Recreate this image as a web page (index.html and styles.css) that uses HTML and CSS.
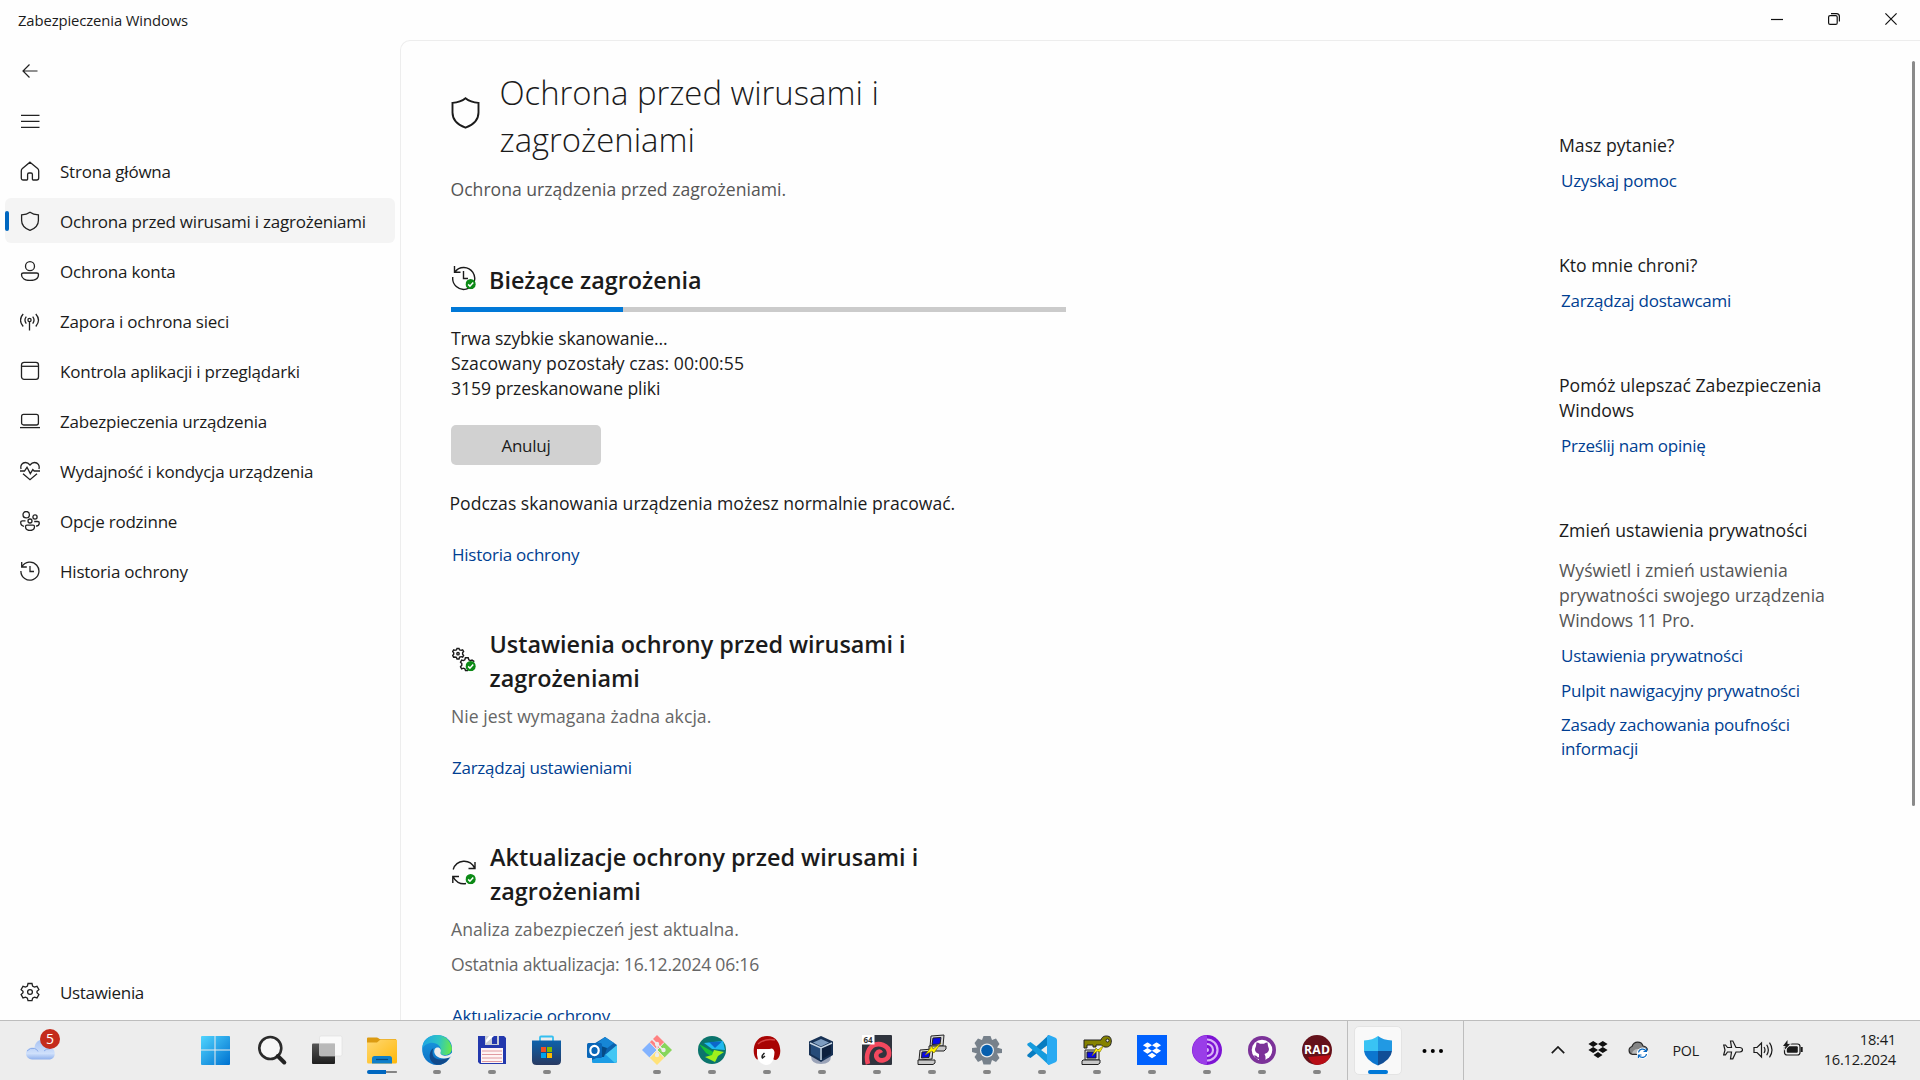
FILE: index.html
```html
<!DOCTYPE html>
<html lang="pl">
<head>
<meta charset="utf-8">
<title>Zabezpieczenia Windows</title>
<link rel="stylesheet" href="styles.css">
</head>
<body>
<svg class="defs" aria-hidden="true">
  <defs>
    <symbol id="shield" viewBox="0 0 20 20"><path d="M10 1.2C12.4 3 15.300 3.700 18.400 3.800V9.500C18.400 14.200 15.300 17.400 10 19.400C4.700 17.400 1.600 14.200 1.600 9.500V3.800C4.700 3.700 7.600 3 10 1.200Z"/></symbol>
    <symbol id="history" viewBox="0 0 20 20"><path d="M1.700 1V6H6.800M2 5.800A9 9 0 1 1 .9 10M10 5V10.500H14"/></symbol>
    <symbol id="ok" viewBox="0 0 10 10"><circle cx="5" cy="5" r="5" fill="#0c8a16" stroke="none"/><path d="M2.600 5.200 4.300 7 7.500 3.300" fill="none" stroke="#fff" stroke-width="1.500"/></symbol>
    <symbol id="gear" viewBox="0 0 20 20"><path d="M8 1.500h4l.6 2.600 1.800 1 2.600-.8 1.900 3.300-1.900 1.800v1.300l1.900 1.900-1.900 3.300-2.600-.8-1.800 1-.6 2.500H8l-.6-2.500-1.800-1-2.600.8-1.900-3.300L3 10.700V9.400L1.100 7.600 3 4.300l2.600.8 1.800-1Z"/><circle cx="10" cy="10" r="2.400"/></symbol>
    <symbol id="dropbox" viewBox="0 0 20 18"><path d="M5.200 0 10 3 5.200 6 .4 3ZM14.800 0 19.600 3 14.800 6 10 3ZM5.200 6 10 9 5.200 12 .4 9ZM14.800 6 19.600 9 14.800 12 10 9ZM10 11 14.500 14 10 17 5.500 14Z"/></symbol>
  </defs>
</svg>

<div class="window">
  <header class="titlebar">
    <span class="window-title">Zabezpieczenia Windows</span>
    <div class="window-controls">
      <svg width="12" height="12"><path d="M0 6.500H12"/></svg>
      <svg width="12" height="12"><rect x=".6" y="2.600" width="8.600" height="8.800" rx="1.500"/><path d="M3 .6H8.500Q11.400.6 11.400 3.500V8.600"/></svg>
      <svg width="12" height="12"><path d="M.4.4 11.600 11.600M11.600.4.4 11.600"/></svg>
    </div>
  </header>

  <div class="frame">
    <aside class="sidebar">
      <div class="tool"><svg class="ico" viewBox="0 0 20 20"><path class="thin" d="M17.500 10H3M9.500 3.500 3 10l6.500 6.500"/></svg></div>
      <div class="tool"><svg class="ico" viewBox="0 0 20 20"><path class="thin" d="M1 4.300H19.500M1 10.300H19.500M1 16.300H19.500"/></svg></div>
      <nav>
        <a class="item"><svg class="ico" viewBox="0 0 20 20"><path d="M10 1.200 17.600 7.600Q18.700 8.500 18.700 10V17Q18.700 19 16.700 19H13.200Q12.400 19 12.400 18.200V13.500Q12.400 12 11 12H9Q7.600 12 7.600 13.500V18.200Q7.600 19 6.800 19H3.300Q1.300 19 1.300 17V10Q1.300 8.500 2.400 7.600Z"/></svg><span>Strona główna</span></a>
        <a class="item selected"><svg class="ico"><use href="#shield"/></svg><span>Ochrona przed wirusami i zagrożeniami</span></a>
        <a class="item"><svg class="ico" viewBox="0 0 20 20"><circle cx="10" cy="5.200" r="4.500"/><path d="M3.500 12H16.500Q18.500 12 18.500 13.800C18.500 17.500 15 19.500 10 19.500S1.500 17.500 1.500 13.800Q1.500 12 3.500 12Z"/></svg><span>Ochrona konta</span></a>
        <a class="item"><svg class="ico" viewBox="0 0 20 20"><circle cx="9.500" cy="9" r="1.600"/><path d="M9.500 10.500V19.500M6.300 5.600Q3.600 9 6.300 12.600M12.700 5.600Q15.400 9 12.700 12.600M3.200 3Q-2.200 9 3.200 15.500M15.800 3Q21.200 9 15.800 15.500"/></svg><span>Zapora i ochrona sieci</span></a>
        <a class="item"><svg class="ico" viewBox="0 0 20 20"><rect x="1.500" y="1.300" width="17" height="17" rx="2.600"/><path d="M1.500 5.300H18.500"/></svg><span>Kontrola aplikacji i przeglądarki</span></a>
        <a class="item"><svg class="ico" viewBox="0 0 20 20"><rect x="1.600" y="3.400" width="16.800" height="10.600" rx="2"/><path d="M0 16.600H20"/></svg><span>Zabezpieczenia urządzenia</span></a>
        <a class="item"><svg class="ico" viewBox="0 0 20 20"><path d="M1.100 8C0 4.600 2.200 1.500 5.500 1.500Q8 1.500 10 4Q12 1.500 14.500 1.500C17.800 1.500 20 4.600 18.900 8M0 10H4.500L7 6.300 10.300 12.600 12.800 8.600 14.200 10H20M3 12.800 10 18.700 17 12.800"/></svg><span>Wydajność i kondycja urządzenia</span></a>
        <a class="item"><svg class="ico" viewBox="0 0 20 20"><circle cx="6.200" cy="3.700" r="3.200"/><circle cx="15" cy="6" r="2.100"/><circle cx="10" cy="10" r="2"/><path d="M5.500 9.800H2.500Q.7 9.800.7 11.500Q.7 14.600 4 15.300M14.200 10.500H17.500Q19.300 10.500 19.300 12Q19.300 14.800 16 15.200M7 14.200H13Q14.500 14.200 14.500 15.600C14.500 18.200 12.500 19.500 10 19.500S5.500 18.200 5.500 15.600Q5.500 14.200 7 14.200Z"/></svg><span>Opcje rodzinne</span></a>
        <a class="item"><svg class="ico"><use href="#history"/></svg><span>Historia ochrony</span></a>
      </nav>
      <a class="item settings"><svg class="ico"><use href="#gear"/></svg><span>Ustawienia</span></a>
    </aside>

    <main class="content">
      <div class="primary">
        <div class="page-head">
          <svg class="head-shield" viewBox="0 0 28 32"><path d="M14 1.300C17.500 4.200 22 5.600 27 5.900V15.500C27 22.800 22.200 27.700 14 30.700C5.800 27.700 1 22.800 1 15.500V5.900C6 5.600 10.500 4.200 14 1.300Z"/></svg>
          <h1>Ochrona przed wirusami i zagrożeniami</h1>
        </div>
        <p class="lead">Ochrona urządzenia przed zagrożeniami.</p>

        <section class="threats">
          <div class="section-head">
            <svg class="status" viewBox="0 0 24 24"><path d="M2.500.5V6.800H8.500M2.800 6.500A11 11 0 1 1 .8 11.500M11.500 5.500V13H16"/><use href="#ok" x="13.500" y="13.500" width="10.300" height="10.300"/></svg>
            <h2>Bieżące zagrożenia</h2>
          </div>
          <div class="progress"><div class="bar" style="width:28%"></div></div>
          <p class="scan">Trwa szybkie skanowanie...</p>
          <p class="eta">Szacowany pozostały czas: 00:00:55</p>
          <p class="count">3159 przeskanowane pliki</p>
          <button class="cancel">Anuluj</button>
          <p class="note">Podczas skanowania urządzenia możesz normalnie pracować.</p>
          <a class="link">Historia ochrony</a>
        </section>

        <section>
          <div class="section-head">
            <svg class="status" viewBox="0 0 24 24"><path d="M5 1h2l.6 1.500 1.600.3 1.400-.5 1 1.700-1 1.200v1.600l1 1.200-1 1.700-1.400-.5-1.600.3L7 11.500H5l-.6-1.700-1.600-.3-1.200.2L.7 8l1-1.200V5.200L.7 4l1-1.700 1.200.5 1.500-.3Z"/><circle cx="6" cy="6.200" r="1.200"/><path d="M16 23h-2.500l-.6-1.700-1.600-.6-1.600.6-1.200-2 1.300-1.500v-1.700L8.500 14.600l1.200-2 1.800.5 1.300-.8.600-2h2.800l.6 2 1.400.8 1.800-.5 2.300 1.500"/><use href="#ok" x="13.500" y="13.500" width="10.300" height="10.300"/></svg>
            <h2>Ustawienia ochrony przed wirusami i zagrożeniami</h2>
          </div>
          <p class="muted">Nie jest wymagana żadna akcja.</p>
          <a class="link">Zarządzaj ustawieniami</a>
        </section>

        <section class="updates">
          <div class="section-head">
            <svg class="status" viewBox="0 0 24 24"><path d="M1.200 9C4.500-1.500 18-2 22.500 7.500M23 1.500V8H16.500M14 23C8 24 3 21 1.200 16.300M.8 22.500V16H7"/><use href="#ok" x="13.500" y="13.500" width="10.300" height="10.300"/></svg>
            <h2>Aktualizacje ochrony przed wirusami i zagrożeniami</h2>
          </div>
          <p class="muted">Analiza zabezpieczeń jest aktualna.</p>
          <p class="muted updated">Ostatnia aktualizacja: 16.12.2024 06:16</p>
          <a class="link">Aktualizacje ochrony</a>
        </section>
      </div>

      <aside class="help">
        <section><h3>Masz pytanie?</h3><a class="link">Uzyskaj pomoc</a></section>
        <section><h3>Kto mnie chroni?</h3><a class="link">Zarządzaj dostawcami</a></section>
        <section><h3>Pomóż ulepszać Zabezpieczenia Windows</h3><a class="link">Prześlij nam opinię</a></section>
        <section>
          <h3>Zmień ustawienia prywatności</h3>
          <p class="privacy">Wyświetl i zmień ustawienia prywatności swojego urządzenia <span class="tight">Windows 11 Pro.</span></p>
          <a class="link">Ustawienia prywatności</a>
          <a class="link">Pulpit nawigacyjny prywatności</a>
          <a class="link last">Zasady zachowania poufności informacji</a>
        </section>
      </aside>
      <div class="scrollbar"></div>
    </main>
  </div>
</div>

<footer class="taskbar">
  <div class="weather">
    <svg width="30" height="22" viewBox="0 0 30 22"><defs><linearGradient id="cl" x1="0" y1="0" x2="0" y2="1"><stop offset="0" stop-color="#a9c3f2"/><stop offset=".7" stop-color="#cfe0fb"/><stop offset="1" stop-color="#8fb0ec"/></linearGradient></defs><path d="M6 21.500A6 6 0 0 1 6 9.500Q7.500 9.300 8.500 9.800C9.500-1 22-1 23 9.300A6.200 6.200 0 0 1 24 21.500Z" fill="url(#cl)"/><path d="M1 13Q4 9.500 8.500 10.500Q11 11 12 13.500M18 13Q20 10.500 24 10.800" fill="none" stroke="#8aabea"/></svg>
    <span class="badge">5</span>
  </div>

  <div class="apps">
    <div class="app"><svg viewBox="2 0 30 30"><defs><linearGradient id="w" gradientUnits="userSpaceOnUse" x1="1" y1="1" x2="30" y2="30"><stop offset="0" stop-color="#52d6ff"/><stop offset="1" stop-color="#0072d0"/></linearGradient></defs><path fill="url(#w)" d="M2 2Q2 1 3 1H15.500V14.500H2ZM16.500 1H30Q31 1 31 2V14.500H16.500ZM2 15.500H15.500V30H3Q2 30 2 29ZM16.500 15.500H31V29Q31 30 30 30H16.500Z"/></svg></div>
    <div class="app"><svg viewBox=".7 0 30 30"><circle cx="14" cy="13" r="11" fill="#f7f7f7" stroke="#2b2b2b" stroke-width="2.600"/><path d="M21.500 21 28 27.500" stroke="#222" stroke-width="4" stroke-linecap="round"/></svg></div>
    <div class="app"><svg viewBox="0 0 30 30"><defs><linearGradient id="tv" x1="0" y1="0" x2="0" y2="1"><stop offset="0" stop-color="#555"/><stop offset="1" stop-color="#1e1e1e"/></linearGradient></defs><rect y="8.500" width="23" height="20.500" rx="1" fill="url(#tv)"/><rect x="7.500" y="1" width="22.500" height="20" rx="1.500" fill="#fff" fill-opacity=".72" stroke="#ddd" stroke-width=".6"/><path d="M7.500 8.500H23V21H7.500Z" fill="#b4b4b4" fill-opacity=".8"/></svg></div>
    <div class="app open-current"><svg viewBox="0 0 30 30"><defs><linearGradient id="fo" x1="0" y1="0" x2="1" y2="1"><stop offset="0" stop-color="#ffd873"/><stop offset="1" stop-color="#ffb809"/></linearGradient></defs><path d="M0 3.500Q0 2.500 1 2.500H10Q11 2.500 12.500 4H29V10H0Z" fill="#dc9b12"/><path d="M0 7.500H10L13.500 4.500H29Q30 4.500 30 5.500V27Q30 28.500 28.500 28.500H1.500Q0 28.500 0 27Z" fill="url(#fo)"/><path d="M5 28.500V23.500Q5 21 7.500 21H22.500Q25 21 25 23.500V28.500Z" fill="#0f7fc9"/><path d="M9 24.500H21" stroke="#074a80" stroke-width="1.200"/></svg></div>
    <div class="app open"><svg viewBox="0 0 30 30"><defs><linearGradient id="e1" x1="0" y1=".3" x2="1" y2=".4"><stop offset="0" stop-color="#1fa5e5"/><stop offset=".55" stop-color="#2dc4c4"/><stop offset="1" stop-color="#67e84c"/></linearGradient><linearGradient id="e2" x1="0" y1="0" x2="0" y2="1"><stop offset="0" stop-color="#1b9de2"/><stop offset="1" stop-color="#0c6fc4"/></linearGradient></defs><path d="M.2 13C1 5 7 0 15 0C24 0 30 6 30 13V20L27 24C24 28 20 30 15 30C6 30-.6 22 .2 13Z" fill="url(#e2)"/><path d="M.5 11C3-3 26-5 29.800 12.500C30.500 18 26 20.500 22.500 20C19.500 20 18 18.800 18.500 17.500C20.500 11 14 7 8 8Q3 9 .5 13Z" fill="url(#e1)"/><path d="M11.500 13C8 22 14 28 28 22C23 31 14 31 11 28C6 24 7 16 11.500 13Z" fill="#114a8b"/><path d="M12.500 14.500C14.500 10.500 20.500 13 18.500 17.500C18 19 19.500 20.500 22.500 20.700Q27 21 30 17.500V21L27.500 22.500C18 26 10.500 20 12.500 14.500Z" fill="#ededed"/></svg></div>
    <div class="app open"><svg viewBox="0 0 30 30"><path d="M1 1H27L29 3V29H3L1 27Z" fill="#2338ad"/><path d="M8 1H22V10H8Z" fill="#c9cdd6"/><path d="M15 1H20V9H15Z" fill="#2338ad"/><path d="M9 8 17 1H12L9 5Z" fill="#fff"/><path d="M4 13H26V28H4Z" fill="#fff4f4"/><path d="M5 16H25M5 19.500H25M5 23H25M5 26.500H25" stroke="#e09aa0" stroke-width="1"/></svg></div>
    <div class="app open"><svg viewBox="1 0 30 30"><path d="M9 6V2.500Q9 1.500 10 1.500H21Q22 1.500 22 2.500V6" fill="none" stroke="#35bff0" stroke-width="1.800"/><defs><linearGradient id="st" x1="0" y1="0" x2="0" y2="1"><stop offset="0" stop-color="#0d62ac"/><stop offset="1" stop-color="#283a62"/></linearGradient></defs><path d="M1 5.500H30V25.500Q30 30 25.500 30H5.500Q1 30 1 25.500Z" fill="url(#st)"/><path d="M10 12H15V17H10Z" fill="#f25022"/><path d="M16 12H21V17H16Z" fill="#7fba00"/><path d="M10 18H15V23H10Z" fill="#00a4ef"/><path d="M16 18H21V23H16Z" fill="#ffb900"/></svg></div>
    <div class="app"><svg viewBox="0 0 30 30"><path d="M5 10 18 2 30 10V26Q30 28 28 28H7Q5 28 5 26Z" fill="#0b62ae"/><path d="M9 9 18 2 27 8 15 17Z" fill="#1686d6"/><path d="M30 10V26Q30 28 28 28H7Q5 28 5 26L18 20Z" fill="#43c7f4"/><path d="M5 25 18 19 28 28H7Q5 28 5 26Z" fill="#1b9ce5"/><path d="M14 11 20 13 17 22H14Z" fill="#064b87"/><rect y="8" width="15" height="15" rx="1.500" fill="#0966b8"/><ellipse cx="7.500" cy="15.500" rx="4.200" ry="4.600" fill="none" stroke="#fff" stroke-width="2.200"/></svg></div>
    <div class="app open"><svg viewBox="0 0 30 30"><path d="M15 0 22.500 7.500 15 15 7.500 7.500Z" fill="#ff8181"/><path d="M22.500 7.500 30 15 22.500 22.500 15 15Z" fill="#87d65a"/><path d="M7.500 7.500 15 15 7.500 22.500 0 15Z" fill="#83b3ff"/><path d="M15 15 22.500 22.500 15 30 7.500 22.500Z" fill="#ffe27a"/><path d="M8 7.500 15 15 8 22.500M22 7.500 15 15 22 22.500" stroke="#ededed" fill="none"/><path d="M10 4 15 9V20M15 9 21 15" stroke="#ededed" stroke-width="1.600" fill="none"/><circle cx="15" cy="9" r="2.200" fill="#ededed"/><circle cx="15" cy="20" r="2.200" fill="#ededed"/><circle cx="21.500" cy="15" r="2.200" fill="#ededed"/></svg></div>
    <div class="app open"><svg viewBox="0 0 30 30"><circle cx="15" cy="15" r="14" fill="#0b746c"/><path d="M7 8 26 6 28 15 15 14Z" fill="#1fb8ee"/><path d="M12 7 25 6.500 18 13Z" fill="#0c66c9"/><path d="M2 9 18 18 14 21 9 18Z" fill="#16c23a"/><path d="M8 22 15 20 17 15 27 17 21 21 18 27Z" fill="#a0f01c"/></svg></div>
    <div class="app open"><svg viewBox="0 0 30 30"><path d="M5 24.500C-1 20 .5 1 15 1S31 20 25 24.500Q23 25.500 21 24L20 14H7V24Z" fill="#a80404"/><path d="M5 14Q14 15 20 13.500Q22 14 22.500 17Q22 30 14 30Q6 29 5 20Z" fill="#fff"/><path d="M12.500 18Q9 21 10.500 23L13 21" fill="none" stroke="#222" stroke-width="1.500"/><path d="M6 9Q13 3 23 5" stroke="#d54444" fill="none" stroke-width="1.500"/></svg></div>
    <div class="app open"><svg viewBox="1 0 30 30"><path d="M5 21H25Q25 29 15 29T5 21" fill="#9aa3b8"/><path d="M15 1 27 6.500V20L15 27 3 20V6.500Z" fill="#173154"/><path d="M15 4 23 7.500 15 11.500 7 7.500Z" fill="#7d9cc0"/><path d="M5 9 14 13V24L5 19Z" fill="#264b79"/><path d="M25 9 16 13V24L25 19Z" fill="#0d203d"/><path d="M4 8 15 13 26 8M15 13V25" fill="none" stroke="#c7d6e4" stroke-width="1.500"/></svg></div>
    <div class="app open"><svg viewBox="0 0 30 30"><rect width="30" height="30" rx="1" fill="#30343e"/><path d="M6 29Q4 22 6 17C9 9 16 8 21 10C29 13 29 23 22 25C15 27 12 20 16 17Q18 16 19 18" fill="none" stroke="#f4485e" stroke-width="4.600"/><rect width="12.500" height="9.500" fill="#fff"/><text x="1.500" y="8" font-size="8" font-weight="700" fill="#333">64</text></svg></div>
    <div class="app open"><svg viewBox="0 0 30 30"><g stroke="#222" stroke-width="1"><path d="M14 1 27 0 26 11 13 11Z" fill="#d8d8d8"/><path d="M16 3 24 2.500 23 9 15 9.500Z" fill="#0909e8"/><path d="M12 11H29V14L27 16H12Z" fill="#c8c8c8"/><path d="M3 15 16 14 15 24 2 25Z" fill="#d8d8d8"/><path d="M5 17 13 16.500 12 22.500 4.500 23Z" fill="#0909e8"/><path d="M1 25H18V28L16 29.500H1Z" fill="#c8c8c8"/></g><path d="M8 20 15 11 16 14 24 8 17 18 15 16Z" fill="#fff000" stroke="#776c00" stroke-width=".6"/></svg></div>
    <div class="app open"><svg viewBox="0 0 30 30"><path d="M11.500 1H18.500L20 5 24 3.500 27.500 9 25 12.500 30 14V18L25 18.500 27.500 23 24 27 20 25 18.500 29.500H11.500L10 25 6 27 2.500 22 5 18.500 0 17V13L5 12.500 2.500 8 6 3.500 10 5Z" fill="#77818b"/><circle cx="15" cy="15.500" r="7" fill="#e7ebee"/><circle cx="15" cy="15.500" r="5.800" fill="#075fae"/></svg></div>
    <div class="app open"><svg viewBox="0 0 30 30"><path d="M22 0V9L3.500 23 .6 21.500Q-.3 20.500.7 19.500L21.500.3Z" fill="#087cc0"/><path d="M22 30V21L3.500 7 .6 8.500Q-.3 9.500.7 10.500L21.500 29.700Z" fill="#159bdd"/><path d="M22 0 28.500 2.800Q30 3.500 30 5V25Q30 26.500 28.500 27.200L22 30 20 28.500V1.500Z" fill="#29aaf2"/></svg></div>
    <div class="app open"><svg viewBox="0 0 30 30"><g stroke="#222" stroke-width="1"><path d="M2 5H19C20 1 24 .3 27 1.500S30 9 27.500 11S20.500 12 19.500 10H14V12H11V10H5V13H2Z" fill="#858200"/><circle cx="25.500" cy="5.500" r="1.500" fill="#ededed"/><path d="M3 15H17V25H3Z" fill="#d8d8d8"/><path d="M5 17H14V23H5Z" fill="#0909e8"/><path d="M1 25H18V28L16 29.500H0V26Z" fill="#c8c8c8"/></g><path d="M10 21 14 13 16 15 22 10 18 17 15 16Z" fill="#fff000" stroke="#776c00" stroke-width=".6"/></svg></div>
    <div class="app open"><svg viewBox="0 0 30 30"><rect width="30" height="30" fill="#0061fe"/><use href="#dropbox" x="5.500" y="7.300" width="19" height="17" fill="#fff"/></svg></div>
    <div class="app open"><svg viewBox="0 0 30 30"><circle cx="15" cy="15" r="15" fill="#7d13d4"/><path d="M15 .5A14.500 14.500 0 0 0 15 29.500Z" fill="#9a3de8"/><path d="M15 4.500A10.500 10.500 0 0 1 15 25.500M15 9A6 6 0 0 1 15 21" fill="none" stroke="#d9b3f7" stroke-width="2.200"/><path d="M15 13A2 2 0 0 1 15 17Z" fill="#d9b3f7"/></svg></div>
    <div class="app open"><svg viewBox="0 0 30 30"><circle cx="15" cy="15" r="14" fill="#7c3299"/><circle cx="15" cy="15" r="10.300" fill="#fff"/><path d="M9.500 7.500Q11 7.300 13 8.700H17Q19 7.300 20.500 7.500L21 11Q24 17 17.500 19L18.500 21.500V28H12V24Q8 24 7 20.500Q9 20 10 21.500T12 22V19Q6 17 9 11Z" fill="#7c3299"/></svg></div>
    <div class="app open"><svg viewBox="0 0 30 30"><circle cx="15" cy="15" r="15" fill="#63111a"/><path d="M15 30A15 15 0 0 0 29 20L6 22Q9 29 15 30Z" fill="#b80d16"/><text x="15" y="19.300" text-anchor="middle" font-size="12.200" font-weight="700" fill="#fff" textLength="26">RAD</text></svg></div>
  </div>

  <div class="focused">
    <div class="tile"><svg viewBox="0 0 28 30"><path d="M14 0Q19 4 28 4.500V15H14Z" fill="#2199e3"/><path d="M14 0Q9 4 0 4.500V15H14Z" fill="#39c3f4"/><path d="M0 15H14V29.500Q1 24 0 15Z" fill="#0c76cf"/><path d="M14 15H28Q27 24 14 29.500Z" fill="#114e96"/></svg></div>
    <svg class="dots" width="22" height="6"><circle cx="2.500" cy="3" r="2"/><circle cx="10.800" cy="3" r="2"/><circle cx="19" cy="3" r="2"/></svg>
  </div>

  <div class="tray">
    <svg class="t-chev" width="14" height="8"><path d="M.8 7.200 7 1 13.200 7.200"/></svg>
    <svg class="t-drop" width="20" height="18"><use href="#dropbox"/></svg>
    <svg class="t-cloud" width="21" height="18" viewBox="0 0 21 18"><path d="M4.500 13.300A4 4 0 0 1 4 5.500C6-.5 13.500 0 15 5Q19 5.500 19.500 9L14 13.300Z" fill="#858585" stroke="#2a2a2a" stroke-width="1.200"/><path d="M4 12.500Q5 8 10 8L13 12.500Z" fill="#bbb" stroke="none"/><circle cx="14.500" cy="12.200" r="5.700" fill="#fff" stroke="none"/><path d="M10.500 11.500A4.100 4.100 0 0 1 18 10M18.500 7.500V10.500H15.500M18.500 13A4.100 4.100 0 0 1 11 14.500M10.500 17V14H13.500" fill="none" stroke="#0b6bc4" stroke-width="1.200"/></svg>
    <span class="lang">POL</span>
    <svg class="t-plane" width="20" height="20" viewBox="0 0 20 20"><path d="M7.500 1H9.800L13 7.500H17Q19.500 7.800 19.500 9.800T17 12H13L9.800 18.800H7.500L8.500 12H4.500L2.500 14.800H.7L2 10 .7 5H2.500L4.500 7.500H8.500Z"/></svg>
    <svg class="t-sound" width="21" height="18" viewBox="0 0 21 18"><path d="M1 6.500H4L8.500 2V16L4 11.500H1ZM11 6Q13 9 11 12M13.700 3.800Q17 9 13.700 14.200M16.500 1.700Q21.500 9 16.500 16.300"/></svg>
    <svg class="t-batt" width="20" height="16" viewBox="0 0 20 16"><rect x="1.500" y="4" width="15.500" height="11" rx="2.500"/><rect x="3.800" y="6.200" width="11" height="6.600" rx="1" fill="#1a1a1a" stroke="none"/><path d="M18.700 7V12" stroke-width="2"/><path d="M4.500 0 0 6H2.500L1.500 10 7 4H4.500Z" fill="#1a1a1a" stroke="#ededed" stroke-width="1.600" paint-order="stroke"/></svg>
    <div class="clock"><span>18:41</span><span>16.12.2024</span></div>
  </div>
</footer>
</body>
</html>
```
FILE: styles.css
```css
* { box-sizing: border-box; }

body {
  margin: 0;
  width: 1920px;
  height: 1080px;
  display: flex;
  flex-direction: column;
  overflow: hidden;
  background: #fefefe;
  color: #1b1b1b;
  font-family: "Open Sans", "Noto Sans", sans-serif;
}

h1, h2, h3, p { margin: 0; font-weight: 400; }
svg { flex: none; display: block; }
.defs { position: absolute; width: 0; height: 0; }

/* Window */
.window { height: 1020px; display: flex; flex-direction: column; }

.titlebar {
  height: 40px;
  flex: none;
  display: flex;
  align-items: center;
  justify-content: space-between;
  padding: 0 23px 0 18px;
}
.window-title { font-size: 14.800px; letter-spacing: -.1px; }
.window-controls { display: flex; gap: 45px; padding-bottom: 2px; }
.window-controls svg { fill: none; stroke: #111; stroke-width: 1.200; }

.frame { flex: 1; min-height: 0; display: flex; }

/* Navigation */
.sidebar {
  width: 400px;
  flex: none;
  display: flex;
  flex-direction: column;
  padding: 8px 5px 0;
}
.tool { height: 50px; padding-left: 15px; display: flex; align-items: center; padding-bottom: 4px; }
.ico {
  width: 20px;
  height: 20px;
  fill: none;
  stroke: #222;
  stroke-width: 1.300;
}
.thin { stroke-width: 1.200; }
.item {
  height: 45px;
  margin-bottom: 5px;
  display: flex;
  align-items: center;
  gap: 20px;
  padding-left: 15px;
  border-radius: 6px;
  font-size: 17px;
  letter-spacing: -.22px;
  white-space: nowrap;
}
.item span { padding-top: 2px; }
.selected { background: #f4f4f4; padding-left: 0; }
.selected::before {
  content: "";
  width: 4px;
  height: 20px;
  margin-right: -9px;
  border-radius: 2px;
  background: #0067c0;
}
.settings { margin: auto 0 6px; letter-spacing: -.32px; }

/* Content panel */
.content {
  flex: 1;
  display: flex;
  justify-content: space-between;
  border: 1px solid #ededed;
  border-width: 1px 0 0 1px;
  border-radius: 10px 0 0 0;
  padding-left: 50px;
  overflow: hidden;
  min-width: 0;
}
.primary {
  width: 615px;
  padding-top: 28px;
  font-size: 17.600px;
  line-height: 25px;
}
.page-head { display: flex; align-items: center; gap: 19.500px; width: 470px; }
.head-shield { width: 29px; height: 32px; margin-bottom: 6px; fill: none; stroke: #1b1b1b; stroke-width: 1.900; }
h1 { padding-top: 1px; margin-bottom: -1px; font-size: 32.850px; font-weight: 300; line-height: 46.500px; }
.lead { margin: 15px 0 0 -.5px; color: #555; }

.primary section { display: flex; flex-direction: column; align-items: flex-start; padding-top: 60px; }
.primary .threats { padding-top: 61px; }
.section-head { display: flex; align-items: center; gap: 13.500px; width: 500px; padding-left: 1px; }
.status { width: 24px; height: 29px; margin-bottom: 3px; fill: none; stroke: #1b1b1b; stroke-width: 1.400; }
.threats .status { margin-bottom: 5px; }
.threats .section-head { gap: 13px; }
h2 { font-size: 23.400px; font-weight: 600; line-height: 34px; letter-spacing: -.03px; }
.updates .section-head { gap: 14px; }
.updates h2 { letter-spacing: .02px; }
.progress { width: 615px; height: 5px; margin: 10px 0 14px; background: #cbcbcb; }
.bar { height: 5px; background: #0078d7; }
.scan { letter-spacing: -.15px; }
.eta { letter-spacing: .08px; }
.count { letter-spacing: -.1px; }
.cancel {
  width: 150px;
  height: 40px;
  margin: 24px 0 26px;
  border: 0;
  border-radius: 5px;
  background: #d1d1d1;
  color: #1b1b1b;
  font: 17px "Open Sans", "Noto Sans", sans-serif;
  letter-spacing: -.24px;
}
.note { margin-left: -1.500px; }
.muted { margin-top: 9px; color: #666; letter-spacing: .05px; }
.updated { margin-top: 10px; letter-spacing: -.25px; }
.link { color: #003e92; font-size: 17px; line-height: 25px; letter-spacing: -.25px; }
.primary .link { margin: 26px 0 0 1px; }

/* Help column */
.help {
  width: 280px;
  margin-left: auto;
  margin-right: 73px;
  padding-top: 92px;
  font-size: 17.650px;
  line-height: 25px;
}
.help section { display: flex; flex-direction: column; margin-bottom: 60px; }
h3 { font-size: 17.650px; line-height: 25px; }
.help .link { margin: 10px 0 0 2px; }
.privacy { margin-top: 15px; color: #555; }
.tight { letter-spacing: -.15px; }
.help .last { line-height: 24px; }
.scrollbar { width: 3px; height: 745px; margin: 20px 5px 0 0; border-radius: 2px; background: #8a8a8a; }

/* Taskbar */
.taskbar {
  height: 60px;
  display: flex;
  border-top: 1px solid #bdbdbd;
  background: #ededed;
}
.weather { position: relative; width: 189px; padding: 17px 0 0 26px; }
.badge {
  position: absolute;
  left: 40px;
  top: 8px;
  width: 20px;
  height: 20px;
  border-radius: 50%;
  background: #c42b1c;
  color: #fff;
  font-size: 14px;
  line-height: 20px;
  text-align: center;
}
.apps { display: flex; width: 1158px; }
.app { width: 55px; flex: none; display: flex; flex-direction: column; align-items: center; padding-top: 14px; }
.app svg { width: 30px; height: 30px; overflow: visible; }
.app:first-child svg { margin-left: -2px; }
.open::after, .open-current::after {
  content: "";
  width: 8px;
  height: 4px;
  margin-top: 5px;
  border-radius: 2px;
  background: #858585;
}
.open-current::after {
  width: 30px;
  background: linear-gradient(90deg, #0067c0 62%, transparent 62%), linear-gradient(#858585, #858585) 0 1px / 100% 2px no-repeat;
}
.focused {
  width: 117px;
  display: flex;
  align-items: center;
  padding-left: 6px;
  border: 1px solid #bdbdbd;
  border-width: 0 1px;
  gap: 20px;
}
.tile {
  width: 48px;
  height: 49px;
  display: flex;
  flex-direction: column;
  align-items: center;
  justify-content: space-between;
  padding-top: 9px;
  border: 1px solid #e4e4e4;
  border-radius: 5px;
  background: #f9f9f9;
}
.tile svg { width: 28px; height: 30px; }
.tile::after { content: ""; width: 20px; height: 4px; border-radius: 2px; background: #0078d7; }

.tray { flex: 1; display: flex; align-items: center; padding: 0 24px 2px 87px; font-size: 14.700px; letter-spacing: -.26px; }
.tray svg { fill: none; stroke: #1a1a1a; stroke-width: 1.200; }
.tray .t-chev { stroke-width: 1.700; }
.tray .t-drop { margin-left: 22.500px; fill: #111; stroke: none; }
.t-cloud { margin-left: 20px; }
.lang { width: 27px; margin: 2px 0 0 24px; font-size: 14.300px; }
.t-plane { margin-left: 23px; }
.t-sound { margin-left: 10px; }
.t-batt { margin: -3px 0 0 9px; }
.clock { margin: -2px 0 0 auto; display: flex; flex-direction: column; align-items: flex-end; line-height: 20px; }
```
